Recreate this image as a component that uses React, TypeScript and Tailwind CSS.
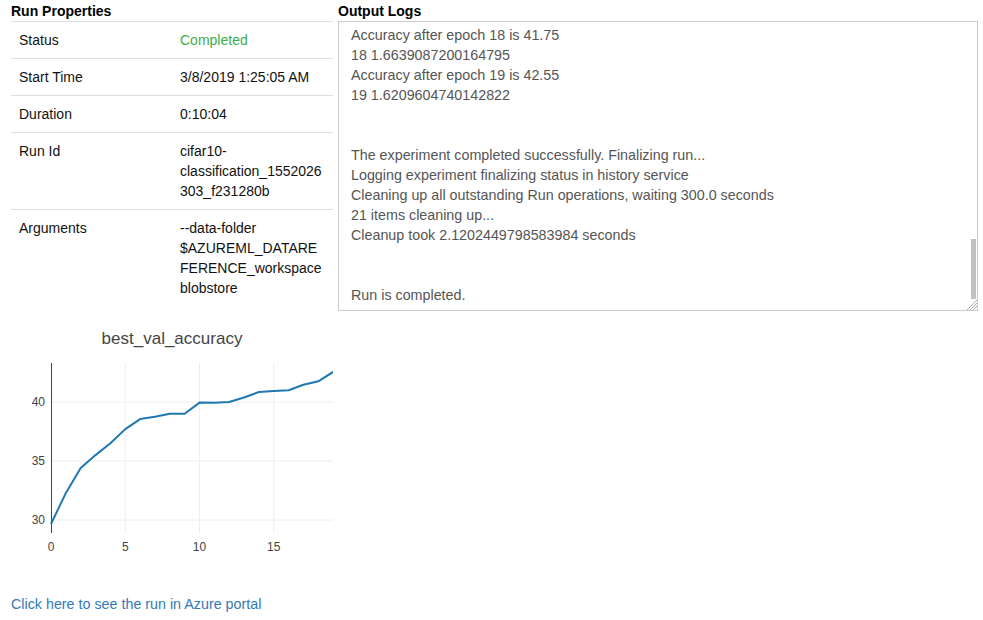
import { useMemo } from "react";

interface RunProperty {
  label: string;
  value: string;
  status?: boolean;
}

const runProperties: RunProperty[] = [
  { label: "Status", value: "Completed", status: true },
  { label: "Start Time", value: "3/8/2019 1:25:05 AM" },
  { label: "Duration", value: "0:10:04" },
  { label: "Run Id", value: "cifar10-classification_1552026303_f231280b" },
  {
    label: "Arguments",
    value: "--data-folder $AZUREML_DATAREFERENCE_workspaceblobstore",
  },
];

const accuracy = [
  29.66, 32.3, 34.4, 35.5, 36.5, 37.7, 38.55, 38.75, 39.0, 39.0, 39.95, 39.93,
  40.0, 40.38, 40.85, 40.93, 41.0, 41.47, 41.75, 42.55,
];

// tail of the log, the textarea is scrolled to the bottom
const logLines = [
  "Accuracy after epoch 18 is 41.75",
  "18 1.6639087200164795",
  "Accuracy after epoch 19 is 42.55",
  "19 1.6209604740142822",
  "",
  "",
  "The experiment completed successfully. Finalizing run...",
  "Logging experiment finalizing status in history service",
  "Cleaning up all outstanding Run operations, waiting 300.0 seconds",
  "21 items cleaning up...",
  "Cleanup took 2.1202449798583984 seconds",
  "",
  "",
  "Run is completed.",
];

function AccuracyChart() {
  const x0 = 40;
  const xStep = 14.85;
  const yFor = (v: number) => 86 - (v - 40) * 11.8;

  const points = useMemo(
    () =>
      accuracy
        .map((v, i) => `${(x0 + i * xStep).toFixed(1)},${yFor(v).toFixed(1)}`)
        .join(" "),
    []
  );

  return (
    <svg width="322" height="244" className="block">
      <text
        x="161"
        y="28"
        textAnchor="middle"
        fontSize="17"
        fill="#444"
        fontFamily="'Liberation Sans', Arial, sans-serif"
      >
        best_val_accuracy
      </text>
      {[30, 35, 40].map((v) => (
        <g key={v}>
          <line x1={x0} x2="322" y1={yFor(v)} y2={yFor(v)} stroke="#eee" />
          <text
            x="34"
            y={yFor(v) + 4}
            textAnchor="end"
            fontSize="12"
            fill="#444"
            fontFamily="'Liberation Sans', Arial, sans-serif"
          >
            {v}
          </text>
        </g>
      ))}
      {[5, 10, 15].map((t) => (
        <line
          key={t}
          x1={x0 + t * xStep}
          x2={x0 + t * xStep}
          y1="47"
          y2="217"
          stroke="#eee"
        />
      ))}
      {[0, 5, 10, 15].map((t) => (
        <text
          key={t}
          x={x0 + t * xStep}
          y="235"
          textAnchor="middle"
          fontSize="12"
          fill="#444"
          fontFamily="'Liberation Sans', Arial, sans-serif"
        >
          {t}
        </text>
      ))}
      <line x1="40.5" x2="40.5" y1="47" y2="217" stroke="#444" />
      <polyline
        points={points}
        fill="none"
        stroke="#1f77b4"
        strokeWidth="2"
        strokeLinejoin="round"
      />
    </svg>
  );
}

export default function App() {
  return (
    <div className="flex flex-row gap-[5px] pl-[11px] pr-[5px] pt-px bg-white text-sm leading-5 text-[#111] font-['Liberation_Sans',Arial,sans-serif]">
      <div className="flex flex-col w-[322px] shrink-0">
        <div className="font-bold text-black">Run Properties</div>
        <div className="flex flex-col">
          {runProperties.map((p) => (
            <div
              key={p.label}
              className="grid grid-cols-2 border-t border-[#ddd]"
            >
              <div className="p-2">{p.label}</div>
              <div
                className={`p-2 [overflow-wrap:anywhere] ${
                  p.status ? "text-[#3fae49]" : ""
                }`}
              >
                {p.value}
              </div>
            </div>
          ))}
        </div>
        <div className="mt-[10px]">
          <AccuracyChart />
        </div>
        <a href="#" className="mt-[34px] text-[14.3px] text-[#337ab7]">
          Click here to see the run in Azure portal
        </a>
      </div>

      <div className="flex flex-col flex-1">
        <div className="font-bold text-black">Output Logs</div>
        <div className="relative h-[290px] border border-[#ccc]">
          <div className="flex flex-col justify-end h-full overflow-hidden pl-3 pb-[5px] text-[14.3px] text-[#555]">
            {logLines.map((line, i) => (
              <div key={i} className="h-5 whitespace-pre shrink-0">
                {line}
              </div>
            ))}
          </div>
          <div className="absolute right-px top-[217px] w-[5px] h-[60px] bg-[#c1c1c1]" />
          <svg width="11" height="11" className="absolute right-0 bottom-0">
            <line x1="1" y1="11" x2="11" y2="1" stroke="#aaa" />
            <line x1="4" y1="11" x2="11" y2="4" stroke="#aaa" />
            <line x1="7" y1="11" x2="11" y2="7" stroke="#aaa" />
          </svg>
        </div>
      </div>
    </div>
  );
}
